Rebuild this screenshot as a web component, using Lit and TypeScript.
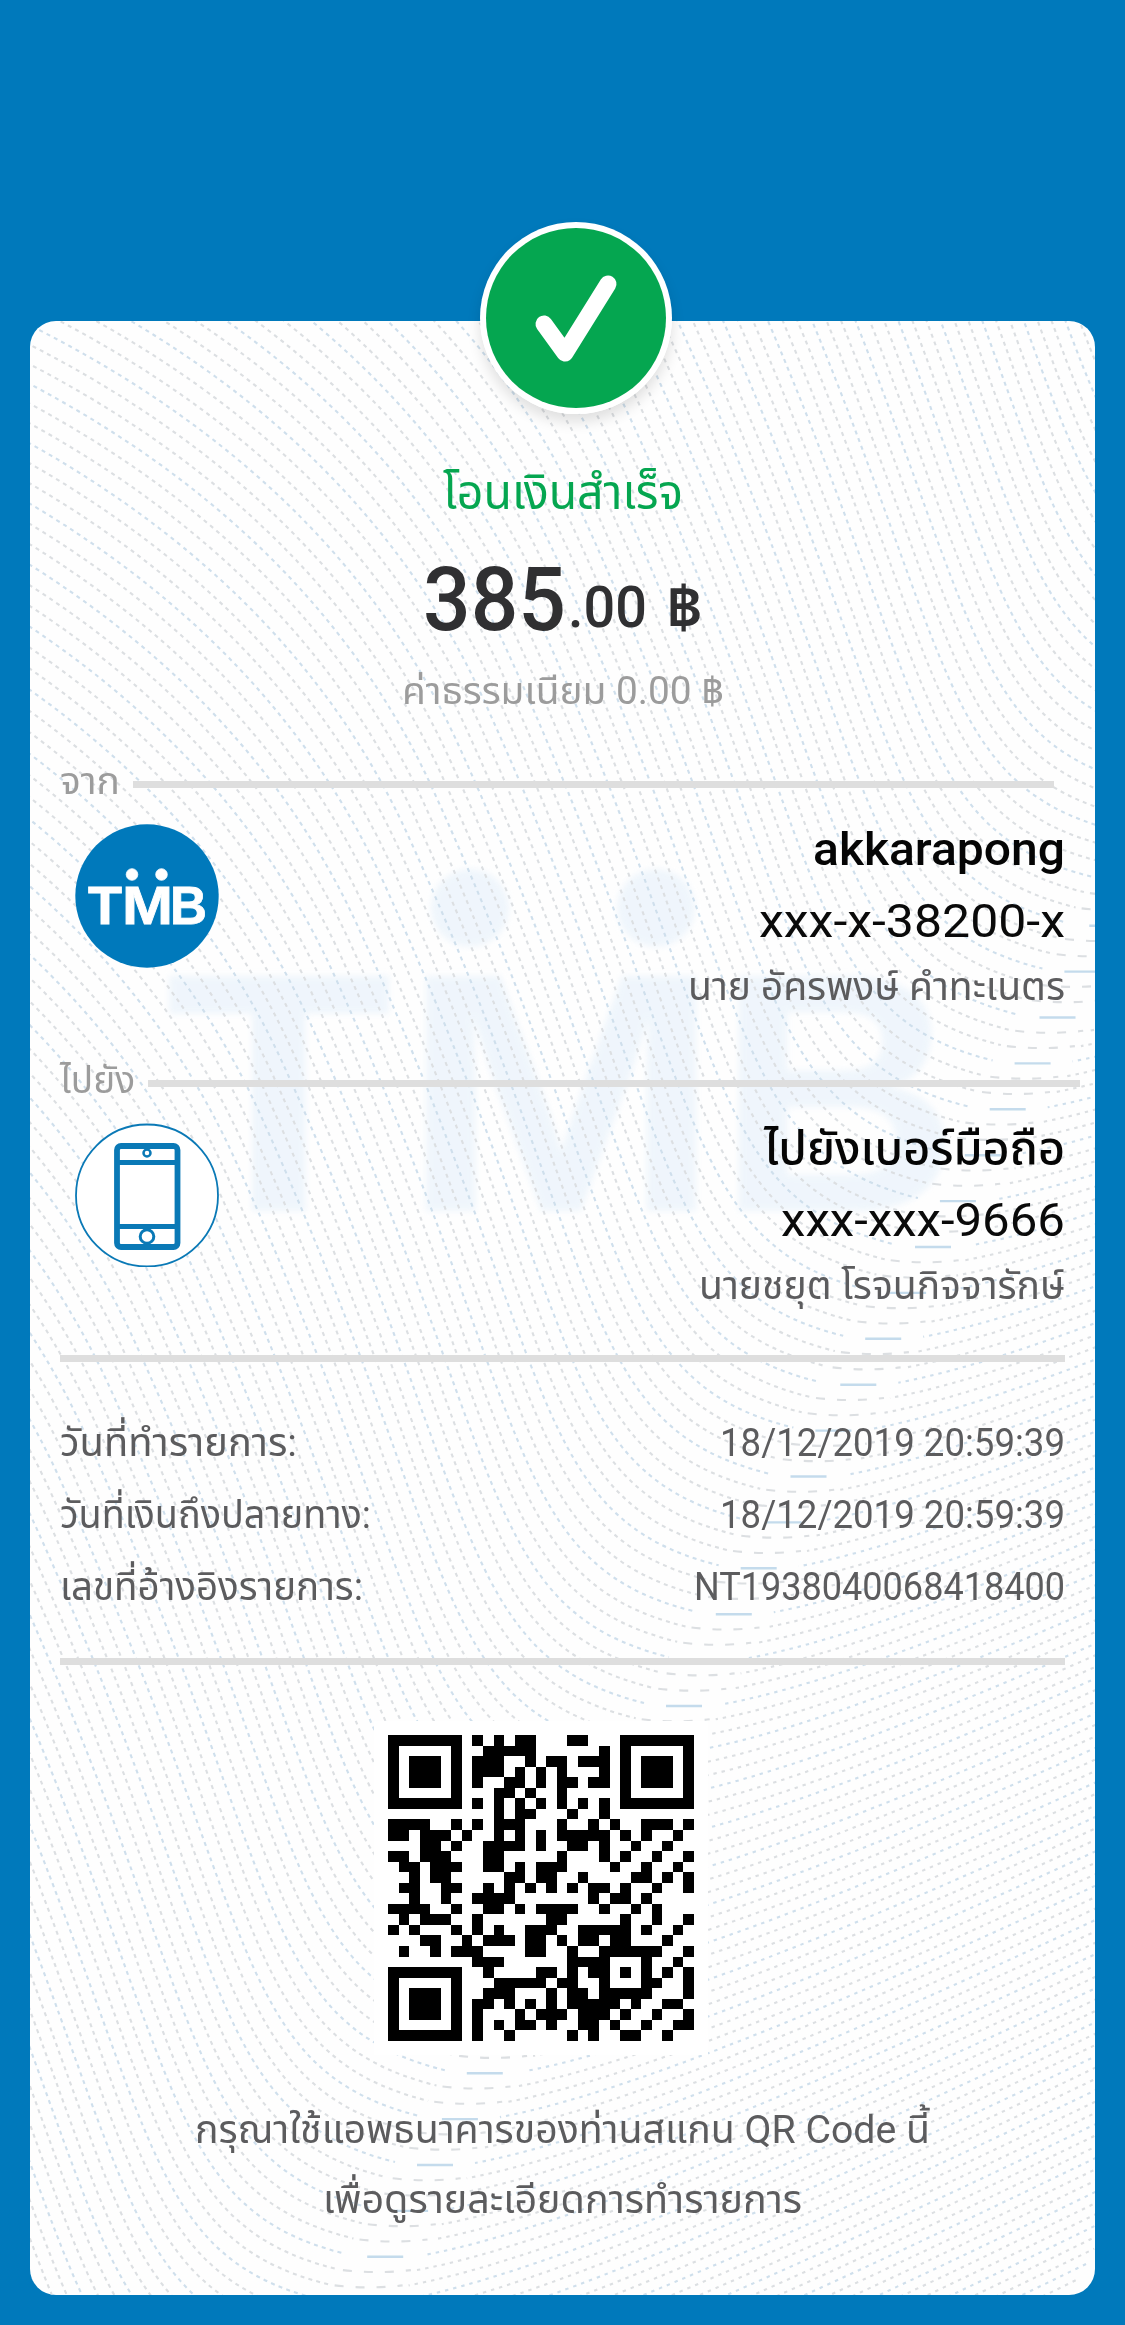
import { LitElement, html, svg, css } from "lit";
import { customElement, property } from "lit/decorators.js";

/** A single line of text condensed or widened to occupy an exact width. */
@customElement("fit-text")
class FitText extends LitElement {
  @property({ type: Number }) width = 100;

  static styles = css`
    :host { display: block; flex: none; white-space: nowrap; }
    .ink { display: inline-block; transform-origin: 0 50%; }
  `;

  firstUpdated() {
    const ink = this.renderRoot.querySelector(".ink") as HTMLElement;
    this.style.width = `${this.width}px`;
    this.style.textAlign = "left";
    ink.style.transform = `scaleX(${this.width / ink.getBoundingClientRect().width})`;
  }

  render() {
    return html`<span class="ink"><slot></slot></span>`;
  }
}

/** QR modules: inclusive column runs for each row. */
const QR_ROWS = [
  "0-6 8 10 12-13 17-18 22-28",
  "0 6 9-13 20 22 28",
  "0 2-4 6 8-10 13 15-16 18-20 22 24-26 28",
  "0 2-4 6 8-10 12 14 16 20 22 24-26 28",
  "0 2-4 6 8 11-12 14 16-17 19-20 22 24-26 28",
  "0 6 10-11 13 16 22 28",
  "0-6 8 10 12 14 16 18 20 22-28",
  "10 12-13 17 20",
  "0-3 6 8 10-12 16 19 21 24-26 28",
  "0-1 3-5 7 10 12 14 16-20 22 24 27",
  "3-4 6 9-12 14 17-18 20 23 26",
  "0-1 3-5 9-10 16 20 22 25 28",
  "1-2 4-6 9-10 12 14-16 21 24 27",
  "2 4-5 11-12 14-15 18 23-24 26 28",
  "1-2 5-6 9 11 13 15 17 19-20 22 25 28",
  "2 5 8-11 19 21-22 24",
  "0-3 6 9-10 12 14-17 20 23 25",
  "1 3-5 8 15-16 22 25 28",
  "0 2 6 8 10 13-15 18-22 24 27",
  "3-4 7 9-11 13-14 16 18-19 21-22 26",
  "1 4 6-8 13-14 17 20-25 28",
  "8-10 17-20 24 27",
  "0-6 9 14-15 17 19-20 22 24 26 28",
  "0 6 10-14 16-17 20 24-25 28",
  "0 2-4 6 9-11 15 17-18 20-24 28",
  "0 2-4 6 8-9 11 13 15 17-21 23 26-27",
  "0 2-4 6 8 12 14-16 18-20 22 25 28",
  "0 6 8 10 12-13 15 18-19 21 24 27-28",
  "0-6 8 11 17 19 22-23 26",
];

const qrPath = QR_ROWS.map((row, y) =>
  row
    .split(" ")
    .map((run) => {
      const [a, b = a] = run.split("-").map(Number);
      return `M${a},${y}h${b - a + 1}v1h${a - b - 1}z`;
    })
    .join("")
).join("");

/** Security pattern: the same S-shaped curve repeated along a diagonal. */
const waves = Array.from({ length: 240 }, (_, i) => {
  const x = 1680 - i * 8.3;
  const y = -130 + i * 15.3;
  const tint = i % 3 === 0 ? "#cfdfec" : "#dcdfe2";
  return svg`
    <g transform="translate(${x} ${y})" stroke=${tint}>
      <path stroke-dasharray="4 4.2" stroke-dashoffset=${-i * 1.7}
        d="M-1500,-1240 C-1150,-1200 -600,-1080 -400,-640 S-230,-50 -40,-3"/>
      <path stroke-dasharray="3.4 5" stroke-dashoffset=${i * 2.3} d="M40,-2 C190,-30 470,-150 900,-360"/>
      ${i % 3 === 0 ? svg`<path class="trough" d="M-18,0H18"/>` : svg`<path stroke-dasharray="9 12" d="M-34,-2Q0,2 34,-2"/>`}
    </g>`;
});

@customElement("app-root")
class AppRoot extends LitElement {
  static styles = css`
    :host {
      display: block;
      font-family: Roboto, "Noto Sans Thai", "Loma", "Sarabun", sans-serif;
    }
    .page {
      box-sizing: border-box;
      height: 2325px;
      padding: 321px 30px 0;
      background: #0079bb;
      overflow: hidden;
    }
    .card {
      position: relative;
      box-sizing: border-box;
      height: 1974px;
      padding: 142px 30px 0 30px;
      border-radius: 26px;
      background: #fefefe;
      color: #5c5c5e;
    }
    .pattern {
      position: absolute;
      left: 0;
      top: 0;
      border-radius: 26px;
    }
    .waves { fill: none; stroke-width: 2.1; }
    .trough { stroke: #c4dbec; stroke-width: 2.4; }
    .mark { fill: #e6f1fb; opacity: 0.62; font-family: "Liberation Sans", Arial, sans-serif; font-weight: 700; }
    .badge {
      position: absolute;
      left: 450px;
      top: -99px;
      width: 192px;
      height: 192px;
      border-radius: 50%;
      box-shadow: 0 8px 14px rgba(0, 0, 0, 0.12);
    }
    .badge svg { display: block; }
    .content { position: relative; display: flex; flex-direction: column; }
    .title { align-self: center; font-size: 49px; line-height: 60px; color: #05a650; }
    .amount {
      display: flex;
      justify-content: center;
      align-items: flex-end;
      height: 100px;
      margin-top: 27px;
      color: #303032;
      font-weight: 500;
    }
    .whole { font-size: 89px; line-height: 100px; margin-right: 2px; }
    .cents { font-size: 57px; line-height: 84px; }
    .baht { font-size: 58px; line-height: 84px; margin-left: 19px; font-weight: 600; }
    .fee { align-self: center; margin-top: 16px; font-size: 38px; line-height: 50px; color: #9c9c9c; }
    .head { display: flex; align-items: center; margin-top: 40px; height: 50px; font-size: 38px; line-height: 50px; color: #9c9c9c; }
    .head.to { margin-top: 43px; }
    .head .bar { flex: 1; height: 7px; margin: 6px 11px 0 13px; background: #dedede; }
    .head.to .bar { margin: 7px -15px 0 13px; }
    .party { display: flex; justify-content: space-between; align-items: flex-start; padding-top: 13px; }
    .party svg { display: block; flex: none; margin: 5px 0 0 15px; }
    .who { display: flex; flex-direction: column; align-items: flex-end; }
    .nick { font-size: 46px; line-height: 60px; font-weight: 500; color: #050505; }
    .acct { margin-top: 12px; font-size: 46px; line-height: 60px; color: #0a0a0a; }
    .name { margin-top: 11px; font-size: 39px; line-height: 50px; }
    .rule { height: 7px; background: #dedede; margin-top: 44px; }
    .rule.low { margin-top: 35px; }
    .details { margin-top: 45px; font-size: 38.5px; line-height: 72px; }
    .row { display: flex; justify-content: space-between; height: 72px; }
    .qr { display: block; margin: 56px 0 0 314px; }
    .foot { display: flex; flex-direction: column; align-items: center; margin-top: 40px; font-size: 38.5px; line-height: 70px; }
    .logo { fill: #fff; stroke: #fff; stroke-width: 0.8; font-family: "Liberation Sans", Arial, sans-serif; font-weight: 700; font-size: 53px; }
  `;

  private background() {
    return html`<svg class="pattern" width="1065" height="1974" viewBox="30 321 1065 1974">
      <defs>
        <filter id="soft"><feGaussianBlur stdDeviation="0.6"/></filter>
        <filter id="softer"><feGaussianBlur stdDeviation="3"/></filter>
      </defs>
      <g class="mark" font-size="342" filter="url(#softer)">
        <text x="165" y="1211" textLength="228" lengthAdjust="spacingAndGlyphs">T</text>
        <text x="400" y="1211" textLength="322" lengthAdjust="spacingAndGlyphs">M</text>
        <text x="716" y="1211" textLength="244" lengthAdjust="spacingAndGlyphs">B</text>
        <circle cx="470" cy="908" r="39"/><circle cx="656" cy="908" r="39"/>
      </g>
      <g class="waves" filter="url(#soft)">${waves}</g>
    </svg>`;
  }

  render() {
    return html`<main class="page"><section class="card">
      ${this.background()}
      <div class="badge">
        <svg width="192" height="192" viewBox="0 0 192 192">
          <circle cx="96" cy="96" r="96" fill="#fff"/><circle cx="96" cy="96" r="90" fill="#05a650"/>
          <path d="M64 102 85 131 128 62" fill="none" stroke="#fff" stroke-width="17" stroke-linecap="round" stroke-linejoin="round"/>
        </svg>
      </div>
      <div class="content">
        <fit-text class="title" width="240">โอนเงินสำเร็จ</fit-text>
        <div class="amount">
          <fit-text class="whole" width="143">385</fit-text>
          <fit-text class="cents" width="79">.00</fit-text>
          <fit-text class="baht" width="37">฿</fit-text>
        </div>
        <fit-text class="fee" width="322">ค่าธรรมเนียม 0.00 ฿</fit-text>

        <div class="head"><fit-text width="60">จาก</fit-text><div class="bar"></div></div>
        <div class="party">
          <svg width="144" height="144" viewBox="0 0 144 144">
            <circle cx="72" cy="72" r="71.7" fill="#0079bb"/>
            <g class="logo">
              <text x="13" y="100" textLength="34" lengthAdjust="spacingAndGlyphs">T</text>
              <text x="47" y="100" textLength="51" lengthAdjust="spacingAndGlyphs">M</text>
              <text x="95" y="100" textLength="37" lengthAdjust="spacingAndGlyphs">B</text>
              <circle cx="57" cy="50.5" r="5.8"/><circle cx="86.5" cy="50.5" r="5.8"/>
            </g>
          </svg>
          <div class="who">
            <fit-text class="nick" width="252">akkarapong</fit-text>
            <fit-text class="acct" width="306">xxx-x-38200-x</fit-text>
            <fit-text class="name" width="377">นาย อัครพงษ์ คำทะเนตร</fit-text>
          </div>
        </div>

        <div class="head to"><fit-text width="75">ไปยัง</fit-text><div class="bar"></div></div>
        <div class="party">
          <svg width="144" height="144" viewBox="0 0 144 144" stroke="#0a79b6">
            <circle cx="72" cy="72.500" r="71" fill="#fff" stroke-width="1.8"/>
            <g fill="none" stroke-width="5.8">
              <rect x="42" y="23" width="60.5" height="101" rx="4"/>
              <path d="M42 39.5h60M42 103.500h60" stroke-width="5"/>
              <circle cx="72" cy="30" r="3.500" stroke-width="2.500"/>
              <circle cx="72" cy="113.500" r="6.800" stroke-width="3"/>
            </g>
          </svg>
          <div class="who">
            <fit-text class="nick" width="301">ไปยังเบอร์มือถือ</fit-text>
            <fit-text class="acct" width="284">xxx-xxx-9666</fit-text>
            <fit-text class="name" width="366">นายชยุต โรจนกิจจารักษ์</fit-text>
          </div>
        </div>

        <div class="rule"></div>
        <div class="details">
          <div class="row"><fit-text width="237">วันที่ทำรายการ:</fit-text><fit-text width="345">18/12/2019 20:59:39</fit-text></div>
          <div class="row"><fit-text width="311">วันที่เงินถึงปลายทาง:</fit-text><fit-text width="345">18/12/2019 20:59:39</fit-text></div>
          <div class="row"><fit-text width="303">เลขที่อ้างอิงรายการ:</fit-text><fit-text width="371">NT1938040068418400</fit-text></div>
        </div>
        <div class="rule low"></div>

        <svg class="qr" width="334" height="334" viewBox="0 0 334 334">
          <rect width="334" height="334" fill="#fff"/>
          <path transform="translate(14 14) scale(10.552)" d=${qrPath} shape-rendering="crispEdges"/>
        </svg>
        <div class="foot">
          <fit-text width="735">กรุณาใช้แอพธนาคารของท่านสแกน QR Code นี้</fit-text>
          <fit-text width="479">เพื่อดูรายละเอียดการทำรายการ</fit-text>
        </div>
      </div>
    </section></main>`;
  }
}
